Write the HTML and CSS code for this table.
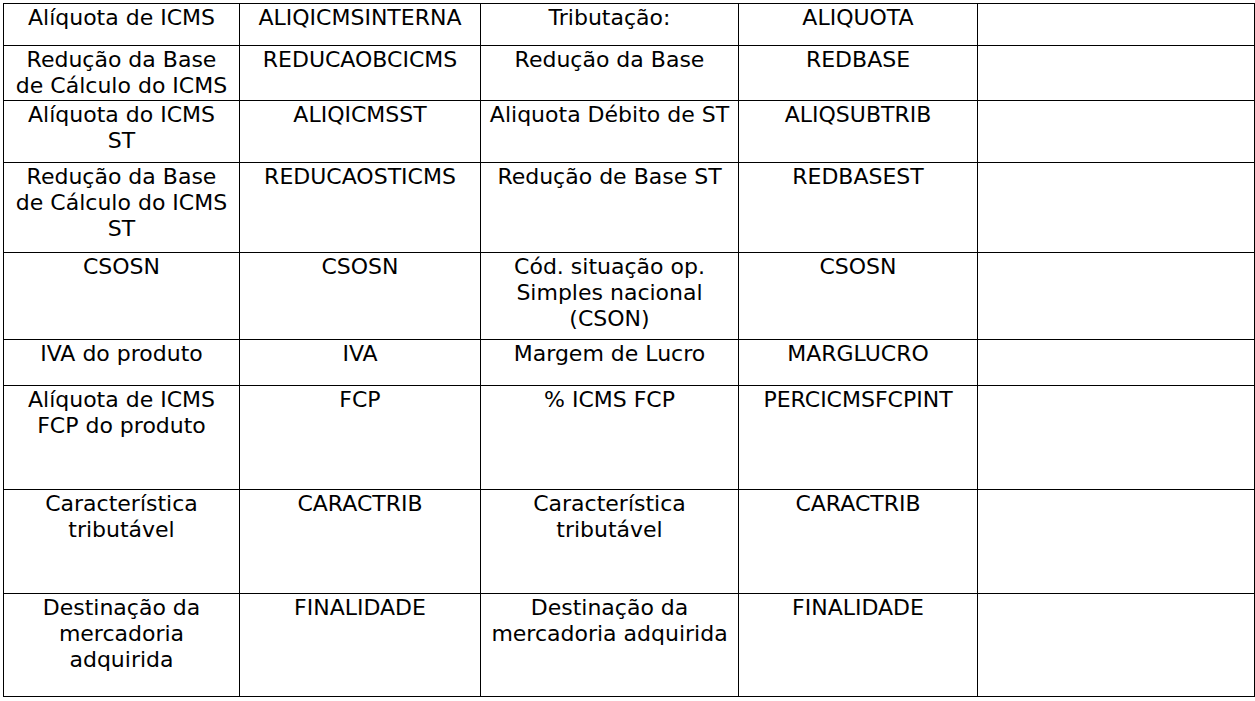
FILE: index.html
```html
<!DOCTYPE html>
<html lang="pt">
<head>
<meta charset="utf-8">
<link rel="stylesheet" href="styles.css">
</head>
<body>
<table class="grid">
  <colgroup>
    <col class="c1"><col class="c2"><col class="c3"><col class="c4"><col class="c5">
  </colgroup>
  <tr class="r1"><td>Alíquota de ICMS</td><td>ALIQICMSINTERNA</td><td>Tributação:</td><td>ALIQUOTA</td><td></td></tr>
  <tr class="r2"><td>Redução da Base<br>de Cálculo do ICMS</td><td>REDUCAOBCICMS</td><td>Redução da Base</td><td>REDBASE</td><td></td></tr>
  <tr class="r3"><td>Alíquota do ICMS<br>ST</td><td>ALIQICMSST</td><td>Aliquota Débito de ST</td><td>ALIQSUBTRIB</td><td></td></tr>
  <tr class="r4"><td>Redução da Base<br>de Cálculo do ICMS<br>ST</td><td>REDUCAOSTICMS</td><td>Redução de Base ST</td><td>REDBASEST</td><td></td></tr>
  <tr class="r5"><td>CSOSN</td><td>CSOSN</td><td>Cód. situação op.<br>Simples nacional<br>(CSON)</td><td>CSOSN</td><td></td></tr>
  <tr class="r6"><td>IVA do produto</td><td>IVA</td><td>Margem de Lucro</td><td>MARGLUCRO</td><td></td></tr>
  <tr class="r7"><td>Alíquota de ICMS<br>FCP do produto</td><td>FCP</td><td>% ICMS FCP</td><td>PERCICMSFCPINT</td><td></td></tr>
  <tr class="r8"><td>Característica<br>tributável</td><td>CARACTRIB</td><td>Característica<br>tributável</td><td>CARACTRIB</td><td></td></tr>
  <tr class="r9"><td>Destinação da<br>mercadoria<br>adquirida</td><td>FINALIDADE</td><td>Destinação da<br>mercadoria adquirida</td><td>FINALIDADE</td><td></td></tr>
</table>
</body>
</html>
```
FILE: styles.css
```css
html, body {
  margin: 0;
  padding: 0;
  background: #fff;
}
.grid {
  margin: 3px 0 0 3px;
  border-collapse: collapse;
  table-layout: fixed;
  width: 1251px;
  font-family: "DejaVu Sans", Verdana, sans-serif;
  font-size: 22px;
  line-height: 26px;
  color: #000;
}
.c1 { width: 236px; }
.c2 { width: 241px; }
.c3 { width: 258px; }
.c4 { width: 239px; }
.c5 { width: 277px; }
.grid td {
  border: 1.5px solid #000;
  padding: 1px 1px 0;
  vertical-align: top;
  text-align: center;
  white-space: nowrap;
  overflow: hidden;
}
.r1 { height: 42px; }
.r2 { height: 55px; }
.r3 { height: 62px; }
.r4 { height: 90px; }
.r5 { height: 87px; }
.r6 { height: 46px; }
.r7 { height: 104px; }
.r8 { height: 104px; }
.r9 { height: 103px; }
```
